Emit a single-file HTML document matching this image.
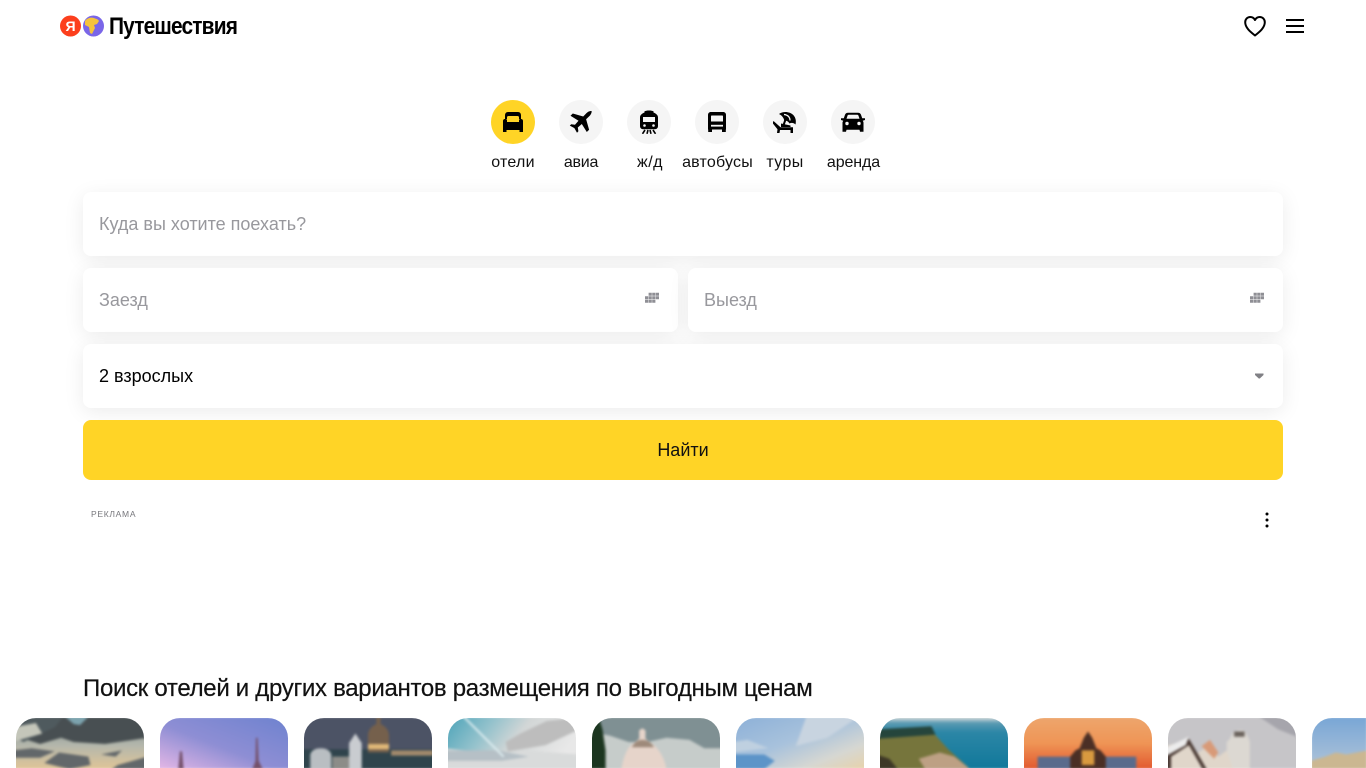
<!DOCTYPE html>
<html lang="ru"><head><meta charset="utf-8"><title>Яндекс Путешествия</title>
<style>
*{box-sizing:border-box}
html,body{margin:0;padding:0;width:1366px;height:768px;overflow:hidden;background:#fff;font-family:"Liberation Sans","DejaVu Sans",sans-serif;color:#000}
.a{position:absolute}
.brand{left:109px;top:13px;font-size:24px;line-height:28px;font-weight:700;letter-spacing:-.95px;transform:scaleX(.87);transform-origin:left}
.c{position:absolute;top:100px;width:44px;height:44px;border-radius:50%;background:#f5f5f5}
.c svg{position:absolute;left:10px;top:10px}
.l{position:absolute;top:153px;font-size:16px;line-height:20px;text-align:center;white-space:nowrap;transform:translateX(-50%);color:#111}
.f{position:absolute;background:#fff;border-radius:8px;height:64px;box-shadow:0 4px 20px rgba(0,0,0,.08);font-size:18px;line-height:64px;padding-left:16px;color:#98989d}
.btn{left:83px;top:420px;width:1200px;height:60px;border-radius:8px;background:#ffd426;text-align:center;font-size:18px;line-height:60px;color:#111}
.h{left:83px;top:674px;font-size:24px;line-height:30px;white-space:nowrap;color:#111;letter-spacing:-.3px;-webkit-text-stroke:.2px #111}
.t{position:absolute;top:718px;width:128px;height:50px;border-radius:20px 20px 0 0;overflow:hidden}
.t svg{display:block;filter:blur(1.2px);transform:scale(1.05)}
</style></head><body>

<svg class="a" style="left:60px;top:15px" width="44" height="22" viewBox="0 0 44 22">
<circle cx="10.500" cy="11" r="10.500" fill="#fc3f1d"/>
<text x="10.500" y="16" font-size="14" font-weight="700" fill="#fff" text-anchor="middle" font-family="Liberation Sans, sans-serif">Я</text>
<circle cx="33.500" cy="11" r="10.500" fill="#7a66e8"/>
<path d="M25 6c2-3 6-4 9-3 2 1 4 1 5 3l-2 3-3 1 1 3-3 6-2-1-1-6-4-2z" fill="#f6c33b"/>
</svg>
<div class="a brand">Путешествия</div>

<svg class="a" style="left:1243px;top:14px" width="24" height="24" viewBox="0 0 24 24"><path d="M12 21.500C8 18.300 2.200 14 2.200 8.300 2.200 5.200 4.500 3 7.200 3 9.200 3 11 4 12 6 13 4 14.800 3 16.800 3 19.500 3 21.800 5.200 21.800 8.300 21.800 14 16 18.300 12 21.500Z" fill="none" stroke="#000" stroke-width="2" stroke-linejoin="round"/></svg>
<svg class="a" style="left:1286px;top:18px" width="18" height="16" viewBox="0 0 18 16"><path d="M0 2h18M0 8h18M0 14h18" stroke="#000" stroke-width="2"/></svg>

<div class="c" style="left:491px;background:#ffd426"><svg width="24" height="24" viewBox="0 0 24 24"><path d="M7 2h10c2 0 3 1.500 3 3.500V9h-2V7.500C18 6.500 17.500 6 16.500 6h-9C6.500 6 6 6.500 6 7.500V9H4V5.500C4 3.500 5 2 7 2Z"/><path d="M4 9c-1.200 0-2 .8-2 2v11h3.500v-2h13v2H22V11c0-1.200-.8-2-2-2h-.5c-1 0-1.500.6-1.500 1.500V12H6v-1.500C6 9.600 5.500 9 4.500 9Z"/></svg></div>
<div class="c" style="left:559px"><svg width="24" height="24" viewBox="0 0 24 24"><path d="M22.800 1.200c-1.600-.8-4 .6-5.300 1.900L14.200 6.500 3.800 3.500 1.500 5.800l8 5L6 14.800l-3.800-.6L.8 15.600l4.600 2.500L8 22.800l1.400-1.500-.6-3.800 4-3.500 5 8 2.300-2.300-3-10.400 3.400-3.300c1.300-1.300 2.700-3.700 1.900-5.300Z"/></svg></div>
<div class="c" style="left:627px"><svg width="24" height="24" viewBox="0 0 24 24"><path d="M12 .5c-2 0-3.500.3-4.500.8v1.200C5 3.500 3 5 3 7.500v8.500c0 2 1.200 3.200 3 3.200h12c1.800 0 3-1.200 3-3.200V7.500c0-2.500-2-4-4.500-5V1.300C15.500.8 14 .5 12 .5Z"/><path d="M6 7h12v5H6z" fill="#f5f5f5"/><circle cx="7.500" cy="15.500" r="1.300" fill="#f5f5f5"/><circle cx="16.500" cy="15.500" r="1.300" fill="#f5f5f5"/><path d="M8 20l-2.500 3.800M16 20l2.500 3.800M11 20l-1 3.800M13 20l1 3.800" stroke="#000" stroke-width="1.600"/></svg></div>
<div class="c" style="left:695px"><svg width="24" height="24" viewBox="0 0 24 24"><path d="M6 2h12c2 0 3 1.300 3 3v14.500h-.2V22H17v-2.500H7V22H3.200v-2.500H3V5c0-1.700 1-3 3-3Z"/><path d="M6 6.300c0-.5.300-.8.800-.8h10.400c.5 0 .8.300.8.800v5.200H6z" fill="#f5f5f5"/><path d="M6 14.800h12v1.800H6z" fill="#f5f5f5"/></svg></div>
<div class="c" style="left:763px"><svg width="24" height="24" viewBox="0 0 24 24"><path d="M6 4C10 .8 17 1.500 20.300 5c2.500 2.800 3 6 2.200 9.500-2-1.800-4-2-6-1-1-2-3-3-5.200-3C10.800 8 9 5.500 6 4Z"/><path d="M11 4.500c3.500.2 6 2.500 6 6" stroke="#f5f5f5" stroke-width="1.300" fill="none"/><path d="M12.500 9.500L10 16.500" stroke="#000" stroke-width="2"/><path d="M.5 11l7 6.200H20V23h-2.500v-3H7l-.5 3H4l.5-3.700L-.5 13Z"/><path d="M8 13.500l9.500 2v1.500H8z"/></svg></div>
<div class="c" style="left:831px"><svg width="24" height="24" viewBox="0 0 24 24"><path d="M7 2.800h10c1.500 0 2.500.7 3 2l1.200 3.400H24V10l-2.300.8c.5.600.8 1.300.8 2.200V21.800H19l-.5-2H5.500l-.5 2H1.500V13c0-.9.3-1.600.8-2.200L0 10V8.200h2.800L4 4.800c.5-1.300 1.500-2 3-2Z"/><path d="M5.500 8.800l1-3c.2-.6.500-1 1.200-1h8.600c.7 0 1 .4 1.200 1l1 3z" fill="#f5f5f5"/><circle cx="6" cy="13.500" r="1.700" fill="#f5f5f5"/><circle cx="18" cy="13.500" r="1.700" fill="#f5f5f5"/></svg></div>

<div class="l" style="left:513px;letter-spacing:.25px">отели</div>
<div class="l" style="left:581px;letter-spacing:-.25px">авиа</div>
<div class="l" style="left:650px;letter-spacing:.5px">ж/д</div>
<div class="l" style="left:717.500px;letter-spacing:.2px">автобусы</div>
<div class="l" style="left:785px;letter-spacing:.4px">туры</div>
<div class="l" style="left:853.500px;letter-spacing:-.1px">аренда</div>

<div class="f" style="left:83px;top:192px;width:1200px">Куда вы хотите поехать?</div>
<div class="f" style="left:83px;top:268px;width:595px">Заезд</div>
<div class="f" style="left:688px;top:268px;width:595px">Выезд</div>
<div class="f" style="left:83px;top:344px;width:1200px;color:#000">2 взрослых</div>
<svg class="a" style="left:645px;top:292px" width="15" height="12" viewBox="0 0 15 12" fill="#8f8f95"><path d="M3.600.7h3.200v3H3.600zM7.200.7h3.200v3H7.200zM10.800.7H14v3h-3.200zM0 4.200h3.200v3H0zM3.600 4.200h3.200v3H3.600zM7.200 4.200h3.200v3H7.200zM10.800 4.200H14v3h-3.200zM0 7.700h3.200v3H0zM3.600 7.700h3.200v3H3.600zM7.200 7.700h3.200v3H7.200z"/></svg>
<svg class="a" style="left:1250px;top:292px" width="15" height="12" viewBox="0 0 15 12" fill="#8f8f95"><path d="M3.600.7h3.200v3H3.600zM7.200.7h3.200v3H7.200zM10.800.7H14v3h-3.200zM0 4.200h3.200v3H0zM3.600 4.200h3.200v3H3.600zM7.200 4.200h3.200v3H7.200zM10.800 4.200H14v3h-3.200zM0 7.700h3.200v3H0zM3.600 7.700h3.200v3H3.600zM7.200 7.700h3.200v3H7.200z"/></svg>
<svg class="a" style="left:1255px;top:372px" width="8.500" height="8" viewBox="0 0 8.500 8"><path d="M0 1.500h8.500v1.500L4.800 6.500h-1L0 3Z" fill="#808085"/></svg>
<div class="a btn">Найти</div>
<div class="a" style="left:91px;top:509px;font-size:8.500px;line-height:10px;letter-spacing:.7px;color:#77777c">РЕКЛАМА</div>
<svg class="a" style="left:1265px;top:512px" width="4" height="16" viewBox="0 0 4 16"><circle cx="2" cy="2" r="1.500"/><circle cx="2" cy="8" r="1.500"/><circle cx="2" cy="14" r="1.500"/></svg>
<div class="a h">Поиск отелей и других вариантов размещения по выгодным ценам</div>

<div class="t" style="left:16px"><svg width="128" height="50"><defs><linearGradient id="a1" x1="0" y1="0" x2="0" y2="1"><stop offset="0" stop-color="#7c8c8e"/><stop offset=".55" stop-color="#b4b7ac"/><stop offset="1" stop-color="#e0c596"/></linearGradient></defs><rect width="128" height="50" fill="url(#a1)"/><path d="M30 0h98v20l-40 6-30-2-12-4-20 6-12-4z" fill="#484f52"/><path d="M0 0h30l18 0-8 10-30 14-10-6z" fill="#4f5a5e"/><path d="M50 0h22l-8 8-6-1z" fill="#7ca3ae"/><path d="M0 10l22-4 6 10-28 8z" fill="#c4c6ba"/><path d="M0 32l18-2 22 3-14 6H0zM30 44l14-10 28 4 2 8-20 4zM84 36l20-4-6 6zM100 46l28-8v12H94z" fill="#62676a"/></svg></div>
<div class="t" style="left:160px"><svg width="128" height="50"><defs><linearGradient id="a2" x1="1" y1="0" x2="0" y2="1"><stop offset="0" stop-color="#6d82cf"/><stop offset=".55" stop-color="#8e8ed4"/><stop offset="1" stop-color="#e6b8e6"/></linearGradient></defs><rect width="128" height="50" fill="url(#a2)"/><path d="M94.500 20h1.500l1 22 4 8h-10l3-8zM22 33h2l1.500 17h-5z" fill="#74506a"/></svg></div>
<div class="t" style="left:304px"><svg width="128" height="50"><rect width="128" height="50" fill="#4c5365"/><rect y="31" width="128" height="19" fill="#2f444c"/><path d="M64 34V18c0-5 3-9 8-11V0h4v7c5 2 8 6 8 11v16z" fill="#75604c"/><rect x="64" y="26" width="20" height="5" fill="#e0b878"/><path d="M86 32h40v5H86z" fill="#a28a6c"/><path d="M9 50V36c1-4 5-6 10-6s9 2 10 6v14z" fill="#b9bec2"/><path d="M30 38h18v12H30z" fill="#8c8c88"/><path d="M46 50V25l6-9 6 9v25z" fill="#c9ccd0"/></svg></div>
<div class="t" style="left:448px"><svg width="128" height="50"><defs><linearGradient id="a4" x1="0" y1="0" x2="1" y2=".3"><stop offset="0" stop-color="#48a2b8"/><stop offset=".35" stop-color="#94c2cc"/><stop offset=".6" stop-color="#d2d6d6"/><stop offset="1" stop-color="#e8e8e8"/></linearGradient></defs><rect width="128" height="50" fill="url(#a4)"/><path d="M58 24l14-8 25-12 28-3 1 12-30 14-36 6z" fill="#bdbdbd"/><path d="M0 30l55 6 20-4 53 4v14H0z" fill="#d9dbdb"/><path d="M0 32h50l30 6-26 4H0z" fill="#b6c0c6"/><path d="M18 0l38 38" stroke="#dcecef" stroke-width="1.800"/></svg></div>
<div class="t" style="left:592px"><svg width="128" height="50"><rect width="128" height="50" fill="#7f9093"/><path d="M0 14l20 4 18 6h18l18-4 22 2 14 8 18 0v24H0z" fill="#c6ccca"/><path d="M31 50c2-12 6-22 12-25l5-4v-8l3-2 3 2v8l5 4c6 3 13 13 15 25z" fill="#e6d4ca"/><path d="M41 29c2-4 5-7 10-7s9 3 11 7z" fill="#9e8a7a"/><path d="M0 50V16l5-10 5-4 3 10 3 20v18z" fill="#1c3620"/></svg></div>
<div class="t" style="left:736px"><svg width="128" height="50"><defs><linearGradient id="a6" x1="0" y1="0" x2="1" y2="1"><stop offset="0" stop-color="#8cb0d8"/><stop offset=".45" stop-color="#a8c2dc"/><stop offset=".75" stop-color="#d6d7d2"/><stop offset="1" stop-color="#e8d2a8"/></linearGradient></defs><rect width="128" height="50" fill="url(#a6)"/><path d="M0 36h30l10 6-10 8H0z" fill="#5c94c8"/><path d="M70 0h50l-30 20-30 8z" fill="#c8d4e0"/><path d="M0 24l14-2 20 8-34 4z" fill="#bfd0e0"/></svg></div>
<div class="t" style="left:880px"><svg width="128" height="50"><defs><linearGradient id="a7" x1="0" y1="0" x2="0" y2="1"><stop offset="0" stop-color="#e8e4e0"/><stop offset=".12" stop-color="#5a9ab2"/><stop offset=".3" stop-color="#2b86a6"/><stop offset="1" stop-color="#10789a"/></linearGradient></defs><rect width="128" height="50" fill="url(#a7)"/><path d="M0 13l50-2 18 20 20 18-2 1H0z" fill="#76753c"/><path d="M40 40l20-6 14 4 14 11-2 1H46z" fill="#bda084"/><path d="M0 36l12 4 8 10H0z" fill="#3e3826"/><path d="M0 12l52-3 4 8-56 4z" fill="#25453c"/></svg></div>
<div class="t" style="left:1024px"><svg width="128" height="50"><defs><linearGradient id="a8" x1="0" y1="0" x2="0" y2="1"><stop offset="0" stop-color="#eda66d"/><stop offset=".5" stop-color="#ef9556"/><stop offset="1" stop-color="#e2582e"/></linearGradient></defs><rect width="128" height="50" fill="url(#a8)"/><rect x="16" y="38" width="94" height="12" fill="#5a6b8c"/><path d="M47 50V38l5-6 4-2 4-10 4-6 4 6 4 10 4 2 5 6v12z" fill="#4b2f25"/><rect x="58" y="32" width="12" height="14" fill="#d99a3f"/></svg></div>
<div class="t" style="left:1168px"><svg width="128" height="50"><rect width="128" height="50" fill="#c6c5c8"/><path d="M90 0h38v20l-20-8z" fill="#a6a5ac"/><path d="M59 50V24l3-3 3-6c5-3 10-3 12 0l3 6 1 3v26z" fill="#dcd8d2"/><path d="M66 14h10v5H66z" fill="#6a625c"/><path d="M0 50V28l23-6 6 14 12-8 10 10 8-6 6 18z" fill="#e0d6ca"/><path d="M0 34l23-13 17 29h-4L23 27 6 38v12H0z" fill="#4a3a34"/><path d="M0 30l23-11-3 8L0 38z" fill="#ececec"/><path d="M35 28l8-6 8 12-4 6z" fill="#d89a78"/></svg></div>
<div class="t" style="left:1312px;width:54px;border-radius:20px 0 0 0"><svg width="54" height="50"><defs><linearGradient id="a10" x1="0" y1="0" x2="0" y2="1"><stop offset="0" stop-color="#78a6d6"/><stop offset="1" stop-color="#b0c4d8"/></linearGradient></defs><rect width="54" height="50" fill="url(#a10)"/><path d="M0 50v-8l14-4 10-4 10 2 20-4v18z" fill="#cbb791"/></svg></div>
</body></html>
